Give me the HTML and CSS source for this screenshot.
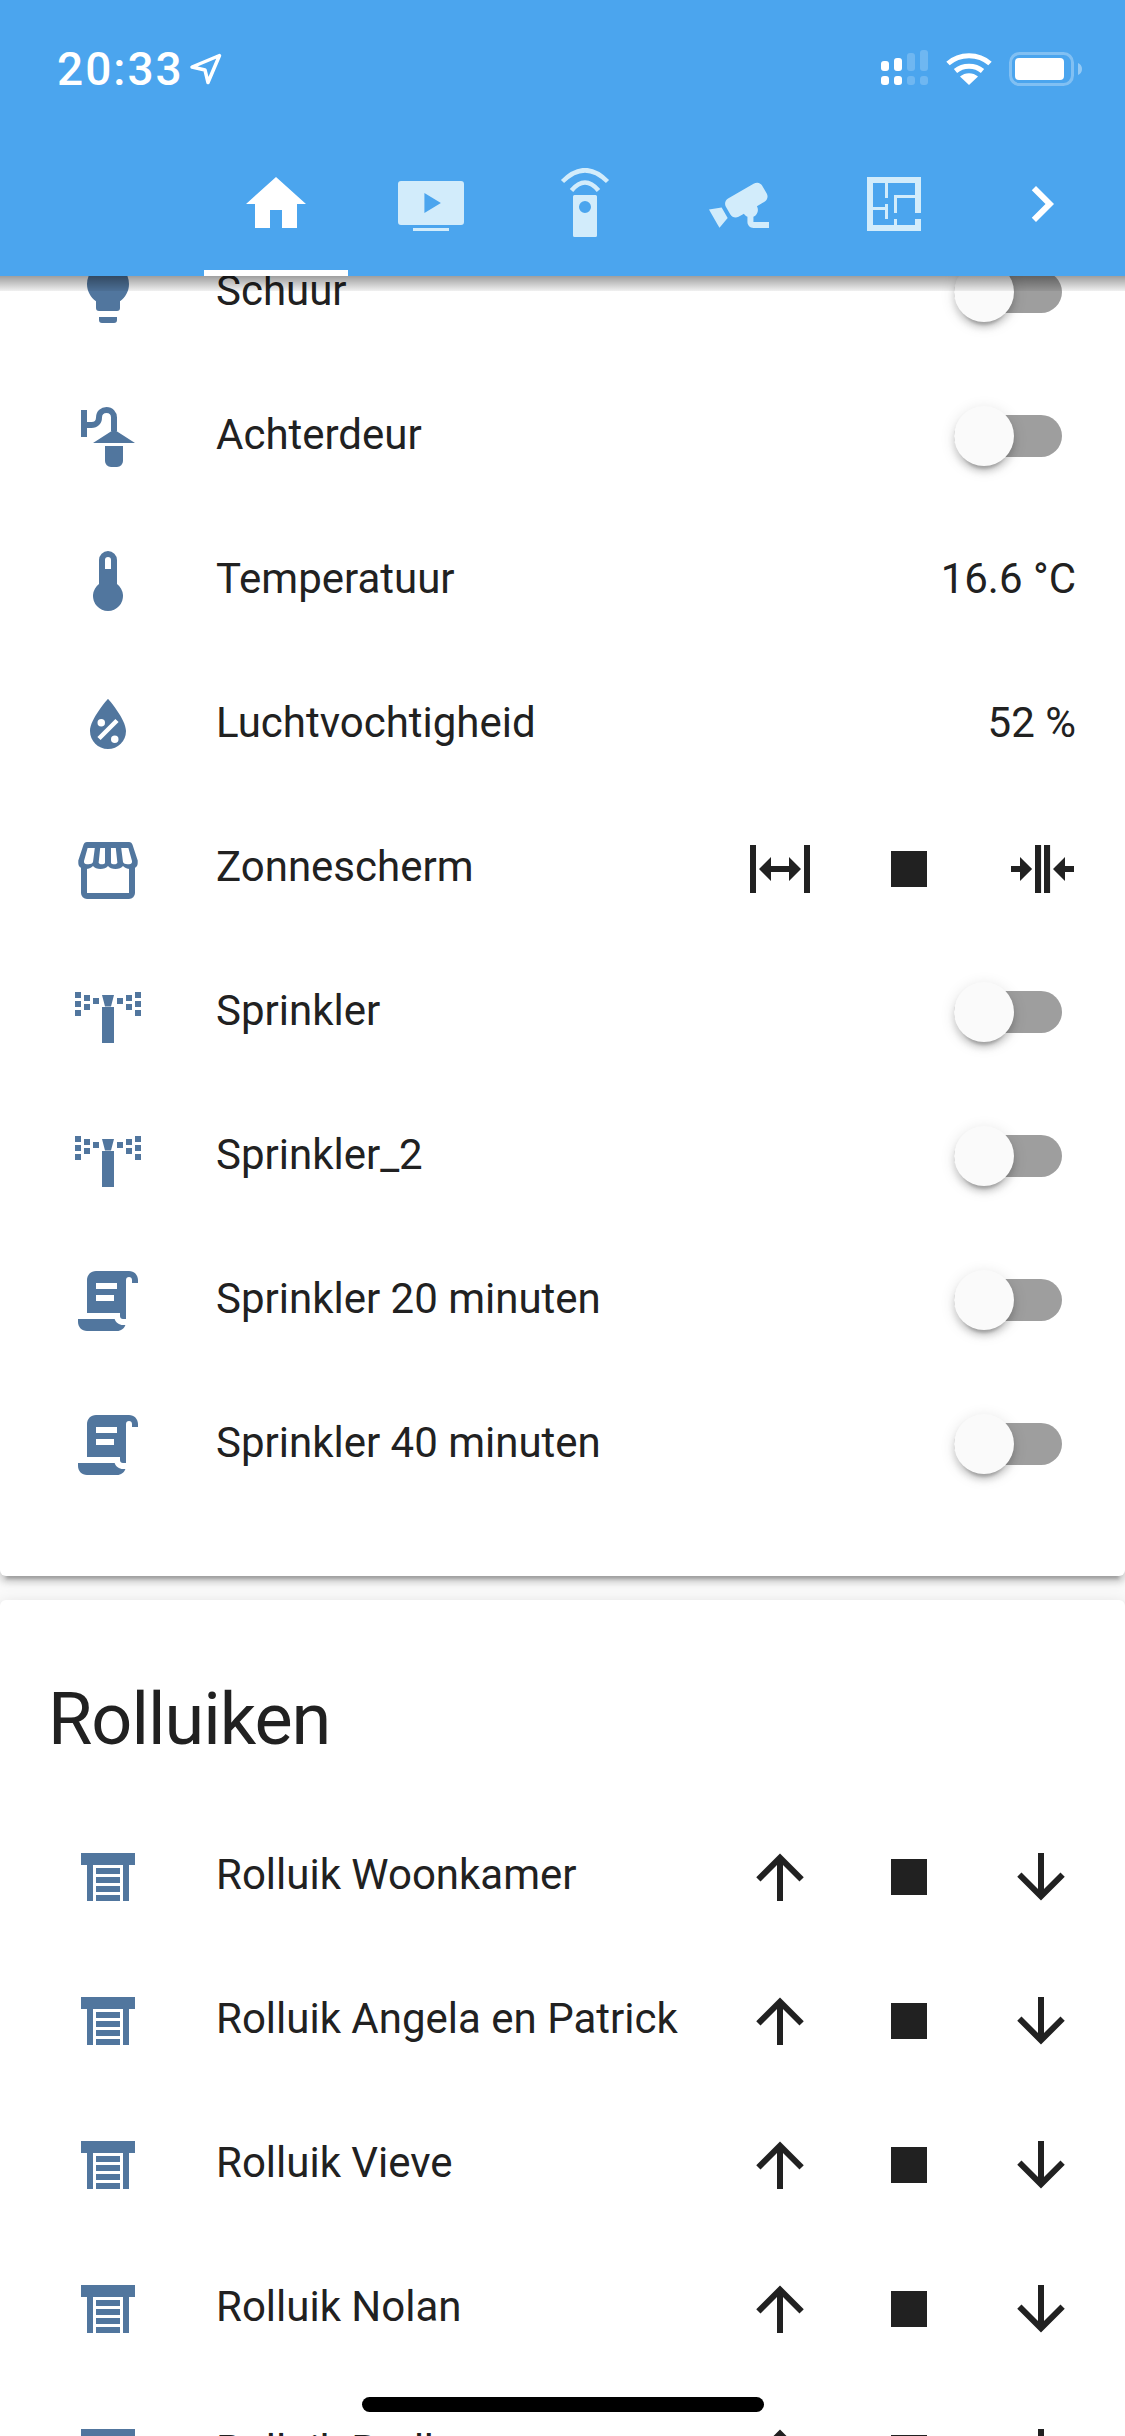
FILE: index.html
```html
<!DOCTYPE html>
<html lang="nl">
<head>
<meta charset="utf-8">
<title>Home Assistant</title>
<link rel="stylesheet" href="styles.css">
</head>
<body>
<div class="screen">
  <svg width="0" height="0" class="defs">
    <defs>
      <symbol id="i-sprinkler" viewBox="0 0 24 24"><path d="M10 6h4l-1 3.8h-2zM10 10h4v12h-4zM1 5h2v2H1zM1 8h2v2H1zM1 11h2v2H1zM4 6h2v2H4zM4 9h2v2H4zM7 7h2v2H7zM15 7h2v2h-2zM18 6h2v2h-2zM18 9h2v2h-2zM21 5h2v2h-2zM21 8h2v2h-2zM21 11h2v2h-2z"/></symbol>
      <symbol id="i-script" viewBox="0 0 24 24"><path fill-rule="evenodd" d="M17.8,20C17.4,21.2 16.3,22 15,22H5C3.3,22 2,20.7 2,19V18H5L14.2,18C14.6,19.2 15.7,20 17,20H17.8M19,2C20.7,2 22,3.3 22,5V6H20V5C20,4.4 19.6,4 19,4C18.4,4 18,4.4 18,5V18H17C16.4,18 16,17.6 16,17V16H5V5C5,3.3 6.3,2 8,2H19M8,6V8H15V6H8M8,10V12H14V10H8Z"/></symbol>
      <symbol id="i-garage" viewBox="0 0 24 24"><path d="M3 4h18v4h-2v12h-2V8H7v12H5V8H3zM8 9h8v2H8zM8 12h8v2H8zM8 15h8v2H8zM8 18h8v2H8z"/></symbol>
      <symbol id="i-up" viewBox="0 0 24 24"><path d="M13,20H11V8L5.5,13.5L4.08,12.08L12,4.16L19.92,12.08L18.5,13.5L13,8V20Z"/></symbol>
      <symbol id="i-down" viewBox="0 0 24 24"><path d="M11,4H13V16L18.5,10.5L19.92,11.92L12,19.84L4.08,11.92L5.5,10.5L11,16V4Z"/></symbol>
      <symbol id="i-stop" viewBox="0 0 24 24"><path d="M18 18H6V6h12z"/></symbol>
    </defs>
  </svg>

  <main class="content">
    <section class="card card-first">
      <div class="row">
        <svg class="ico" viewBox="0 0 24 24"><path d="M12,2A7,7 0 0,0 5,9C5,11.38 6.19,13.47 8,14.74V17A1,1 0 0,0 9,18H15A1,1 0 0,0 16,17V14.74C17.81,13.47 19,11.38 19,9A7,7 0 0,0 12,2M9,21A1,1 0 0,0 10,22H14A1,1 0 0,0 15,21V20H9V21Z"/></svg>
        <span class="name">Schuur</span><span class="toggle"></span>
      </div>
      <div class="row">
        <svg class="ico" viewBox="0 0 24 24"><path class="ln" d="M4 3v9M5 8H6.5C8 8 9 7 9 5.5C9 3.9 10.2 3 11.5 3C13 3 14 4.2 14 5.5V10"/><path d="M14 9.5L21 14H7zM11 15h6v5a2 2 0 0 1-2 2h-2a2 2 0 0 1-2-2z"/></svg>
        <span class="name">Achterdeur</span><span class="toggle"></span>
      </div>
      <div class="row">
        <svg class="ico" viewBox="0 0 24 24"><path fill-rule="evenodd" d="M15 13V5A3 3 0 0 0 9 5V13A5 5 0 1 0 15 13M12 4A1 1 0 0 1 13 5V8H11V5A1 1 0 0 1 12 4Z"/></svg>
        <span class="name">Temperatuur</span><span class="value">16.6 °C</span>
      </div>
      <div class="row">
        <svg class="ico" viewBox="0 0 24 24"><path fill-rule="evenodd" d="M12,3.25C12,3.25 6,10 6,14C6,17.32 8.69,20 12,20A6,6 0 0,0 18,14C18,10 12,3.25 12,3.25M14.47,9.97L15.53,11.03L9.53,17.03L8.47,15.97M9.75,10A1.25,1.25 0 0,1 11,11.25A1.25,1.25 0 0,1 9.75,12.5A1.25,1.25 0 0,1 8.5,11.25A1.25,1.25 0 0,1 9.75,10M14.25,15.5A1.25,1.25 0 0,1 15.5,16.75A1.25,1.25 0 0,1 14.25,18A1.25,1.25 0 0,1 13,16.75A1.25,1.25 0 0,1 14.25,15.5Z"/></svg>
        <span class="name">Luchtvochtigheid</span><span class="value">52 %</span>
      </div>
      <div class="row">
        <svg class="ico" viewBox="0 0 24 24"><path d="M4 11.5V20a1 1 0 0 0 1 1H19a1 1 0 0 0 1-1V11.5" class="ln"/><path fill-rule="evenodd" d="M5 3H19C19.6 3 20 3.4 20.2 4L21.9 9.2V10C21.9 11.2 21 12 19.5 12C18.2 12 17.4 11.5 17 11C16.5 11.6 15.6 12 14.5 12C13.4 12 12.5 11.6 12 11C11.5 11.6 10.6 12 9.5 12C8.4 12 7.5 11.6 7 11C6.6 11.5 5.8 12 4.5 12C3 12 2.1 11.2 2.1 10V9.2L3.8 4C4 3.4 4.4 3 5 3ZM5.2 5H7.6L7 9.7C6.8 10.4 5.8 10.5 5 10.4C4.2 10.3 3.9 9.9 4 9.3ZM9.4 5H11V9.8C11 10.4 10 10.5 9.5 10.4C9 10.3 8.8 10 8.9 9.7ZM13 5H14.6L15.1 9.7C15.2 10 15 10.3 14.5 10.4C14 10.5 13 10.4 13 9.8ZM16.4 5H18.8L20 9.3C20.1 9.9 19.8 10.3 19 10.4C18.2 10.5 17.2 10.4 17 9.7Z"/></svg>
        <span class="name">Zonnescherm</span>
        <span class="ctrls">
          <svg class="btn" viewBox="0 0 24 24"><path d="M9,11H15V8L19,12L15,16V13H9V16L5,12L9,8V11M2,20V4H4V20H2M20,20V4H22V20H20Z"/></svg>
          <svg class="btn" viewBox="0 0 24 24"><use href="#i-stop"/></svg>
          <svg class="btn" viewBox="0 0 24 24"><path d="M13,20V4H15.03V20H13M10,20V4H12.03V20H10M5,8L9.03,12L5,16V13H2V11H5V8M20,16L16,12L20,8V11H23V13H20V16Z"/></svg>
        </span>
      </div>
      <div class="row">
        <svg class="ico"><use href="#i-sprinkler"/></svg>
        <span class="name">Sprinkler</span><span class="toggle"></span>
      </div>
      <div class="row">
        <svg class="ico"><use href="#i-sprinkler"/></svg>
        <span class="name">Sprinkler_2</span><span class="toggle"></span>
      </div>
      <div class="row">
        <svg class="ico"><use href="#i-script"/></svg>
        <span class="name">Sprinkler 20 minuten</span><span class="toggle"></span>
      </div>
      <div class="row">
        <svg class="ico"><use href="#i-script"/></svg>
        <span class="name">Sprinkler 40 minuten</span><span class="toggle"></span>
      </div>
    </section>

    <section class="card card-second">
      <h2 class="card-title">Rolluiken</h2>
      <div class="row">
        <svg class="ico"><use href="#i-garage"/></svg>
        <span class="name">Rolluik Woonkamer</span>
        <span class="ctrls"><svg class="btn"><use href="#i-up"/></svg><svg class="btn"><use href="#i-stop"/></svg><svg class="btn"><use href="#i-down"/></svg></span>
      </div>
      <div class="row">
        <svg class="ico"><use href="#i-garage"/></svg>
        <span class="name">Rolluik Angela en Patrick</span>
        <span class="ctrls"><svg class="btn"><use href="#i-up"/></svg><svg class="btn"><use href="#i-stop"/></svg><svg class="btn"><use href="#i-down"/></svg></span>
      </div>
      <div class="row">
        <svg class="ico"><use href="#i-garage"/></svg>
        <span class="name">Rolluik Vieve</span>
        <span class="ctrls"><svg class="btn"><use href="#i-up"/></svg><svg class="btn"><use href="#i-stop"/></svg><svg class="btn"><use href="#i-down"/></svg></span>
      </div>
      <div class="row">
        <svg class="ico"><use href="#i-garage"/></svg>
        <span class="name">Rolluik Nolan</span>
        <span class="ctrls"><svg class="btn"><use href="#i-up"/></svg><svg class="btn"><use href="#i-stop"/></svg><svg class="btn"><use href="#i-down"/></svg></span>
      </div>
      <div class="row">
        <svg class="ico"><use href="#i-garage"/></svg>
        <span class="name">Rolluik Badkamer</span>
        <span class="ctrls"><svg class="btn"><use href="#i-up"/></svg><svg class="btn"><use href="#i-stop"/></svg><svg class="btn"><use href="#i-down"/></svg></span>
      </div>
    </section>
  </main>

  <header class="app-header">
    <div class="status">
      <div class="status-left">
        <span class="time">20:33</span>
        <svg class="loc" viewBox="0 0 33 33"><path d="M30.5 3.5L3 15L16 18L19 30.5Z"/></svg>
      </div>
      <div class="status-right">
        <svg class="signal" viewBox="0 0 48 35">
          <rect x="0" y="11" width="8" height="10" rx="3"/><rect x="13" y="8" width="8" height="13" rx="3"/>
          <rect class="dim" x="26" y="3" width="8" height="18" rx="3"/><rect class="dim" x="39" y="0" width="8" height="21" rx="3"/>
          <rect x="0" y="26" width="8" height="9" rx="3"/><rect x="13" y="26" width="8" height="9" rx="3"/>
          <rect class="dim" x="26" y="26" width="8" height="9" rx="3"/><rect class="dim" x="39" y="26" width="8" height="9" rx="3"/>
        </svg>
        <svg class="wifi" viewBox="0 0 46 33">
          <path class="arc" d="M2 11.5C13.5 1 32.5 1 44 11.5"/>
          <path class="arc" d="M9.5 19C17 12.5 29 12.5 36.5 19"/>
          <path d="M23 33L14 24.5C19 20 27 20 32 24.5Z"/>
        </svg>
        <svg class="battery" viewBox="0 0 74 34">
          <rect class="shell" x="1.5" y="1.5" width="62" height="31" rx="9"/>
          <rect x="6" y="6" width="49" height="22" rx="4"/>
          <path class="nub" d="M69 11c2.500 1 4 3 4 6s-1.500 5-4 6z"/>
        </svg>
      </div>
    </div>
    <nav class="tabs">
      <div class="tab tab-active"><svg viewBox="0 0 24 24"><path d="M10 20V14H14V20H19V12H22L12 3L2 12H5V20H10Z"/></svg></div>
      <div class="tab"><svg viewBox="0 0 24 24"><path fill-rule="evenodd" d="M2 4.300H22a1 1 0 0 1 1 1V18a1 1 0 0 1-1 1H2a1 1 0 0 1-1-1V5.300a1 1 0 0 1 1-1zM9.800 8.300V15L15.300 11.700zM6 20H18V21H6z"/></svg></div>
      <div class="tab"><svg viewBox="0 0 24 24"><path class="tab-arc" d="M4.500 4.500Q12 -3 19.500 4.500M7.500 7.500Q12 2.200 16.500 7.500"/><path fill-rule="evenodd" d="M8.500 9H15.500a.5.500 0 0 1 .5.500V22.500a.5.500 0 0 1-.5.500H8.500a.5.500 0 0 1-.5-.5V9.500a.5.500 0 0 1 .5-.5zM12 11a2 2 0 1 0 0 4a2 2 0 1 0 0-4z"/></svg></div>
      <div class="tab"><svg viewBox="0 0 24 24"><path d="M18.15,4.94C17.77,4.91 17.37,5 17,5.2L8.35,10.2C7.39,10.76 7.07,12 7.62,12.94L9.12,15.53C9.67,16.5 10.89,16.82 11.85,16.27L13.65,15.23C13.92,15.69 14.32,16.06 14.81,16.27V18.04C14.81,19.13 15.7,20 16.81,20H22V18.04H16.81V16.27C17.72,15.87 18.31,14.97 18.31,14C18.31,13.54 18.19,13.11 17.97,12.73L20.5,11.27C21.47,10.71 21.8,9.5 21.24,8.53L19.74,5.94C19.4,5.34 18.79,5 18.15,4.94M6.22,13.17L2,13.87L2.75,15.17L4.75,18.63L5.5,19.93L8.22,16.63L6.22,13.17Z"/></svg></div>
      <div class="tab"><svg viewBox="0 0 24 24"><path d="M10,5V10H9V5H5V13H9V12H10V17H9V14H5V19H12V17H13V19H19V17H21V21H3V3H21V15H19V10H13V15H12V9H19V5H10Z"/></svg></div>
      <svg class="tab-next" viewBox="0 0 24 24"><path d="M8.590,16.580L13.170,12L8.590,7.410L10,6L16,12L10,18L8.590,16.580Z"/></svg>
    </nav>
  </header>
  <div class="home-indicator"></div>
</div>
</body>
</html>
```

FILE: styles.css
```css
* { box-sizing: border-box; }
html, body { margin: 0; padding: 0; }
body { font-family: Roboto, "Liberation Sans", sans-serif; color: #212121; background: #fafafa; }
.defs { position: absolute; }
.screen { position: relative; width: 1125px; height: 2436px; overflow: hidden; background: #fafafa; }

.content { display: flex; flex-direction: column; gap: 24px; }
.card {
  background: #fff;
  border-radius: 6px;
  position: relative;
  box-shadow: 0 6px 6px 0 rgba(0,0,0,.14), 0 3px 15px 0 rgba(0,0,0,.12), 0 9px 3px -6px rgba(0,0,0,.2);
}
.card-first { padding: 221px 0 59px; }
.card-second { padding-bottom: 48px; }
.card-title { margin: 0; height: 205px; padding: 78px 0 0 48px; font-size: 72px; line-height: 84px; font-weight: 400; letter-spacing: -1px; }

.row { display: flex; align-items: center; height: 144px; padding: 0 48px 0 72px; }
.ico { width: 72px; height: 72px; flex: none; fill: #51769e; margin-right: 72px; }
.ln { fill: none; stroke: #51769e; stroke-width: 2; }
.name { flex: 1; font-size: 42px; line-height: 60px; white-space: nowrap; position: relative; top: -2px; }
.value { font-size: 42px; line-height: 60px; position: relative; top: -2px; margin-right: 1px; }
.ctrls { display: flex; gap: 60px; }
.btn { width: 72px; height: 72px; fill: #212121; }
.btn:first-child { margin-right: -3px; }

.toggle { position: relative; width: 108px; height: 42px; margin: 0 15px 2px 0; border-radius: 21px; background: #9e9e9e; }
.toggle::after {
  content: "";
  position: absolute;
  left: 0;
  top: -9px;
  width: 60px;
  height: 60px;
  border-radius: 50%;
  background: #fafafa;
  box-shadow: 0 6px 6px 0 rgba(0,0,0,.14), 0 3px 15px 0 rgba(0,0,0,.12), 0 9px 3px -6px rgba(0,0,0,.2);
}

.app-header { position: absolute; left: 0; top: 0; width: 1125px; height: 276px; background: #4ba5ee; color: #fff; }
.app-header::after {
  content: "";
  position: absolute;
  left: 0;
  right: 0;
  top: 276px;
  height: 15px;
  background: linear-gradient(rgba(0,0,0,.38), rgba(0,0,0,.06));
}
.status { display: flex; justify-content: space-between; height: 168px; padding: 50px 42px 0 57px; }
.status-left { display: flex; align-items: flex-start; gap: 5px; }
.time { font-size: 46px; line-height: 38px; letter-spacing: 2px; font-weight: 500; }
.loc { width: 33px; height: 33px; margin-top: 2px; fill: none; stroke: #fff; stroke-width: 3.500; stroke-linejoin: round; }
.status-right { display: flex; align-items: flex-start; gap: 0; }
.signal { width: 48px; height: 35px; fill: #fff; margin-right: 17px; }
.dim { opacity: .2; }
.wifi { width: 46px; height: 33px; margin-top: 2px; fill: #fff; margin-right: 17px; }
.arc { fill: none; stroke: #fff; stroke-width: 5; }
.battery { width: 74px; height: 34px; margin-top: 2px; fill: #fff; }
.shell { fill: none; stroke: rgba(255,255,255,.3); stroke-width: 3; }
.nub { opacity: .4; }

.tabs { display: flex; height: 108px; padding-left: 199px; align-items: stretch; }
.tab { position: relative; width: 154.400px; display: flex; justify-content: center; }
.tab svg { width: 72px; height: 72px; fill: #d2ecfb; }
.tab-arc { fill: none; stroke: #d2ecfb; stroke-width: 1.500; }
.tab-active svg { fill: #fff; }
.tab-active::after { content: ""; position: absolute; left: 5px; width: 144px; bottom: 0; height: 6px; background: #fff; }
.tab-next { width: 72px; height: 72px; fill: #fff; margin-left: 35px; }

.home-indicator { position: absolute; left: 362px; top: 2397px; width: 402px; height: 15px; border-radius: 8px; background: #000; }
```
